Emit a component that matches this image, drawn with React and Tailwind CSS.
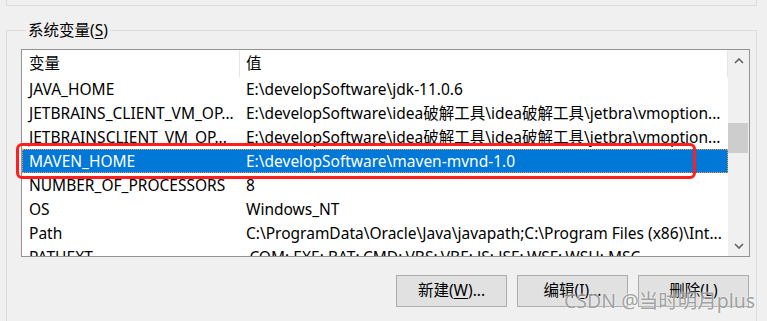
import React from 'react'

const rows = [
  ['JAVA_HOME', 'E:\\developSoftware\\jdk-11.0.6'],
  ['JETBRAINS_CLIENT_VM_OP...', 'E:\\developSoftware\\idea破解工具\\idea破解工具\\jetbra\\vmoption...'],
  ['JETBRAINSCLIENT_VM_OP...', 'E:\\developSoftware\\idea破解工具\\idea破解工具\\jetbra\\vmoption...'],
  ['MAVEN_HOME', 'E:\\developSoftware\\maven-mvnd-1.0', true],
  ['NUMBER_OF_PROCESSORS', '8'],
  ['OS', 'Windows_NT'],
  ['Path', 'C:\\ProgramData\\Oracle\\Java\\javapath;C:\\Program Files (x86)\\Int...'],
  ['PATHEXT', '.COM;.EXE;.BAT;.CMD;.VBS;.VBE;.JS;.JSE;.WSF;.WSH;.MSC'],
]

function Chevron({ down }) {
  return (
    <svg width="10" height="6" viewBox="0 0 10 6" fill="none">
      <polyline
        points={down ? '1,1 5,5 9,1' : '1,5 5,1 9,5'}
        stroke="#606060"
        strokeWidth="1.6"
      />
    </svg>
  )
}

function Btn({ pre, u, post }) {
  return (
    <button className="w-[111px] h-[32px] bg-[#e1e1e1] border border-[#adadad] text-[15.5px] text-black flex items-center justify-center">
      {pre}(<span className="underline underline-offset-2">{u}</span>){post}
    </button>
  )
}

export default function App() {
  return (
    <div
      className="w-[767px] h-[321px] bg-[#f0f0f0] overflow-hidden relative text-black"
      style={{ fontFamily: '"Noto Sans", "Noto Sans CJK SC", sans-serif' }}
    >
      <div className="ml-[6px] w-[751px] h-[6px] border-l border-r border-b border-[#dcdcdc]" />

      <fieldset className="ml-[6px] mt-[14px] w-[751px] h-[400px] border border-[#dcdcdc] pl-[14px] pr-[6px]">
        <legend className="ml-[5px] px-[2px] h-[20px] leading-[20px] text-[15.5px]">
          系统变量(<span className="underline underline-offset-2">S</span>)
        </legend>

        <div className="mt-[9px] h-[208px] border border-[#939393] bg-white flex overflow-hidden">
          <div className="flex-1 flex flex-col overflow-hidden">
            <div className="h-[27px] flex items-center text-[15.5px] shrink-0 pt-[1px]">
              <div className="w-[218px] pl-[7px] h-full flex items-center border-r border-[#e5e5e5]">变量</div>
              <div className="flex-1 pl-[6px] h-full flex items-center border-r border-[#e5e5e5]">值</div>
            </div>
            {rows.map(([k, v, sel]) => (
              <div
                key={k}
                className={
                  sel
                    ? 'h-[24px] shrink-0 flex items-center pt-[2px] text-[15.5px] bg-[#0078d7] text-white outline-1 outline-dotted outline-[#f0a04a] -outline-offset-1'
                    : 'h-[24px] shrink-0 flex items-center pt-[2px] text-[15.5px]'
                }
              >
                <div className="w-[218px] pl-[7px] whitespace-nowrap overflow-hidden">{k}</div>
                <div className="flex-1 pl-[6px] whitespace-nowrap overflow-hidden">{v}</div>
              </div>
            ))}
          </div>

          <div className="w-[21px] bg-[#f0f0f0] flex flex-col shrink-0">
            <div className="h-[21px] flex items-center justify-center">
              <Chevron />
            </div>
            <div className="h-[52px]" />
            <div className="h-[30px] mr-[1px] bg-[#cdcdcd]" />
            <div className="flex-1" />
            <div className="h-[21px] flex items-center justify-center">
              <Chevron down />
            </div>
          </div>
        </div>

        <div className="mt-[18px] flex justify-end gap-[10px] pr-[1px]">
          <Btn pre="新建" u="W" post="..." />
          <Btn pre="编辑" u="I" post="..." />
          <Btn pre="删除" u="L" post="" />
        </div>
      </fieldset>

      <div className="absolute left-[16px] top-[143px] w-[680px] h-[36px] border-[3px] border-[#ff1f1f] rounded-[6px]" />

      <div className="absolute left-[564px] top-[286px] text-[19.5px] text-[#8a8a8a]/80 whitespace-nowrap [text-shadow:0_0_2px_#ffffff]">
        CSDN @当时明月plus
      </div>
    </div>
  )
}
